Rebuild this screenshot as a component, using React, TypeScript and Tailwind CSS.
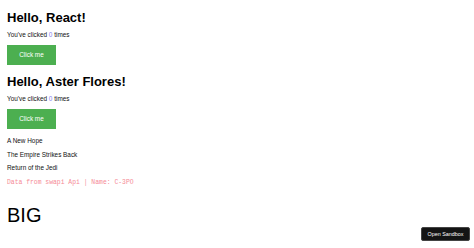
import React from "react";

function Counter({ name }: { name: string }) {
  return (
    <>
      <h1 className="text-[13px] leading-[15px] font-bold mt-[9px] text-black">Hello, {name}!</h1>
      <p className="text-[6.4px] leading-[8px] mt-[6px] text-[#111]">
        You've clicked <span className="text-[#8a7cf0]">0</span> times
      </p>
      <button className="mt-[6px] w-[49px] h-[20px] bg-[#4caf50] text-white text-[6.4px] leading-[8px] flex items-center justify-center">
        Click me
      </button>
    </>
  );
}

export default function App() {
  return (
    <div
      className="relative w-[474px] h-[248px] overflow-hidden bg-white pl-[7px] pt-[1px]"
      style={{ fontFamily: '"Liberation Sans", Arial, sans-serif' }}
    >
      <Counter name="React" />
      <Counter name="Aster Flores" />
      <p className="text-[6.4px] leading-[8px] mt-[8px] text-[#111]">A New Hope</p>
      <p className="text-[6.4px] leading-[8px] mt-[6px] text-[#111]">The Empire Strikes Back</p>
      <p className="text-[6.4px] leading-[8px] mt-[5px] text-[#111]">Return of the Jedi</p>
      <p
        className="text-[6.4px] leading-[8px] mt-[7px] text-[#f58a96]"
        style={{ fontFamily: '"Liberation Mono", "Courier New", monospace' }}
      >
        Data from swapi Api | Name: C-3PO
      </p>
      <div className="text-[20px] leading-[22px] mt-[17px] text-black">BIG</div>
      <div className="absolute right-[4px] bottom-[7px] w-[49px] h-[14px] bg-[#141414] border border-[#444] rounded-[2px] text-white text-[5.4px] flex items-center justify-center">
        Open Sandbox
      </div>
    </div>
  );
}
